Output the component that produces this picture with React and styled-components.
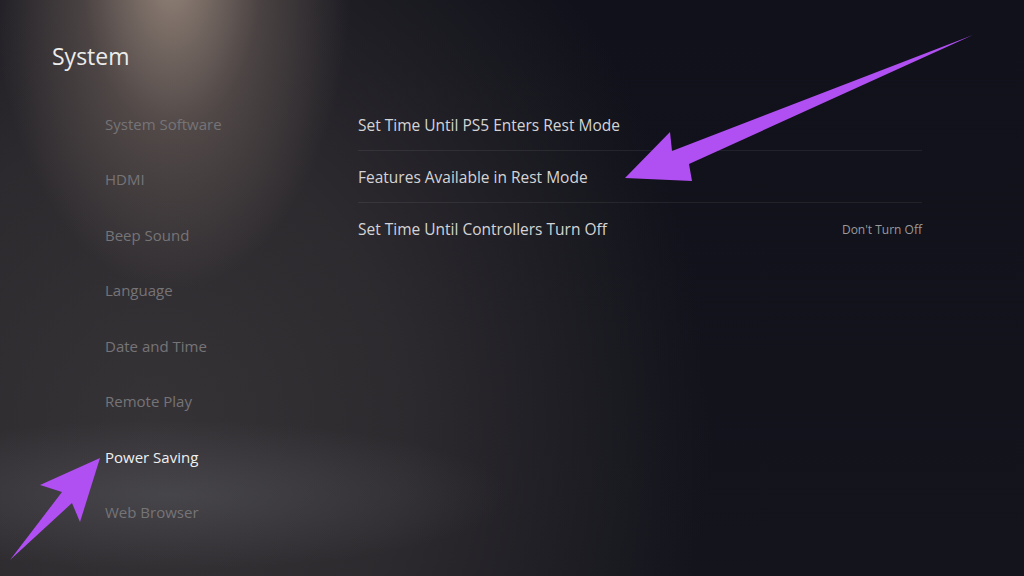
import React from "react";
import styled, { createGlobalStyle } from "styled-components";

const Global = createGlobalStyle`
  html, body { margin: 0; padding: 0; background: #10111a; }
  body { font-family: "Open Sans", "Noto Sans", sans-serif; }
  * { box-sizing: border-box; }
`;

const Screen = styled.div`
  position: relative;
  width: 1024px;
  height: 576px;
  overflow: hidden;
  display: flex;
  background:
    radial-gradient(ellipse 180px 320px at 172px -30px, rgba(175,155,140,0.82) 0%, rgba(140,122,112,0.38) 50%, rgba(0,0,0,0) 100%),
    radial-gradient(ellipse 340px 75px at 170px 495px, rgba(105,107,113,0.35) 0%, rgba(0,0,0,0) 100%),
    radial-gradient(ellipse 560px 660px at 150px 430px, rgba(54,51,55,1) 0%, rgba(47,44,48,0.94) 45%, rgba(16,17,26,0) 100%),
    linear-gradient(to bottom, #10111a, #13141c);
`;

const Sidebar = styled.aside`
  width: 340px;
  flex: none;
  display: flex;
  flex-direction: column;
  padding: 40px 0 0 52px;
`;

const Title = styled.h1`
  margin: 0 0 24px 0;
  font-weight: 400;
  font-size: 23px;
  line-height: 32px;
  color: #ececec;
`;

const Menu = styled.nav`
  display: flex;
  flex-direction: column;
  padding-left: 53px;
`;

const MenuItem = styled.div`
  height: 55.5px;
  display: flex;
  align-items: center;
  font-size: 15px;
  color: ${(p) => (p.$active ? "#f0f0f0" : "#767477")};
`;

const Content = styled.main`
  flex: 1;
  padding: 99px 102px 0 18px;
`;

const Row = styled.div`
  height: 52px;
  display: flex;
  align-items: center;
  justify-content: space-between;
  border-bottom: ${(p) => (p.$last ? "none" : "1px solid rgba(255,255,255,0.07)")};
`;

const Label = styled.span`
  font-size: 15.5px;
  color: #d4d4d6;
`;

const Value = styled.span`
  font-size: 12px;
  color: #9a9a9e;
`;

const Overlay = styled.svg`
  position: absolute;
  left: 0;
  top: 0;
  pointer-events: none;
`;

const menu = [
  "System Software",
  "HDMI",
  "Beep Sound",
  "Language",
  "Date and Time",
  "Remote Play",
  "Power Saving",
  "Web Browser",
];

export default function App() {
  return (
    <>
      <Global />
      <Screen>
        <Sidebar>
          <Title>System</Title>
          <Menu>
            {menu.map((m) => (
              <MenuItem key={m} $active={m === "Power Saving"}>
                {m}
              </MenuItem>
            ))}
          </Menu>
        </Sidebar>
        <Content>
          <Row>
            <Label>Set Time Until PS5 Enters Rest Mode</Label>
          </Row>
          <Row>
            <Label>Features Available in Rest Mode</Label>
          </Row>
          <Row $last>
            <Label>Set Time Until Controllers Turn Off</Label>
            <Value>Don't Turn Off</Value>
          </Row>
        </Content>
        <Overlay width="1024" height="576" viewBox="0 0 1024 576">
          <polygon
            points="625,178 670,132 672,151 973,35 689,164 692,181"
            fill="#b04ff2"
          />
          <polygon
            points="100,458 40,485 62,492 10,560 72,503 80,522"
            fill="#b04ff2"
          />
        </Overlay>
      </Screen>
    </>
  );
}
